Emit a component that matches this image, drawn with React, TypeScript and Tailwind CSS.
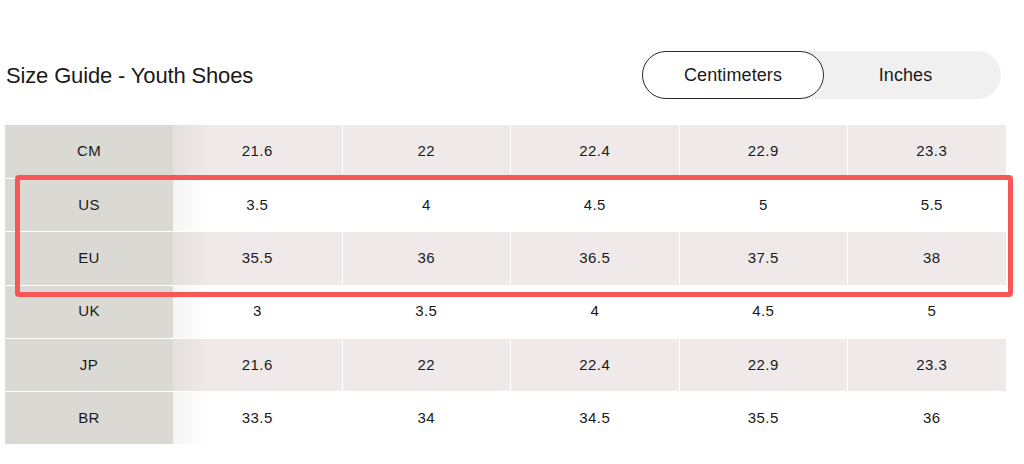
const rows: Array<{ label: string; values: string[]; shaded: boolean }> = [
  { label: 'CM', values: ['21.6', '22', '22.4', '22.9', '23.3'], shaded: true },
  { label: 'US', values: ['3.5', '4', '4.5', '5', '5.5'], shaded: false },
  { label: 'EU', values: ['35.5', '36', '36.5', '37.5', '38'], shaded: true },
  { label: 'UK', values: ['3', '3.5', '4', '4.5', '5'], shaded: false },
  { label: 'JP', values: ['21.6', '22', '22.4', '22.9', '23.3'], shaded: true },
  { label: 'BR', values: ['33.5', '34', '34.5', '35.5', '36'], shaded: false },
]

export default function App() {
  return (
    <div className="w-[1024px] h-[464px] bg-white text-[#1a1a1a] pt-[51px] font-['Liberation_Sans',Arial,sans-serif]">
      <div className="flex items-center justify-between pl-[6px] pr-[23px] h-[48px]">
        <h1 className="text-[22px] tracking-[-0.15px] leading-none pt-[1px]">Size Guide - Youth Shoes</h1>
        <div className="flex w-[359px] h-[48px] rounded-full bg-[#f1f0f0]">
          <button className="w-[182px] h-full rounded-full bg-white border border-[#2a2a2a] text-[18px] tracking-[0.1px]">
            Centimeters
          </button>
          <button className="flex-1 h-full pr-[14px] text-[18px] tracking-[0.1px]">Inches</button>
        </div>
      </div>

      <div className="relative mt-[26px] ml-[5px] w-[1001px]">
        <div className="w-[1001px] overflow-hidden">
          <div className="w-[1012px]">
            {rows.map((row, i) => (
              <div
                key={row.label}
                className={`relative grid grid-cols-[168px_repeat(5,168.5px)] h-[53.2px] text-[15px] tracking-[0.4px] ${
                  i > 0 ? 'border-t-[1.5px] border-white' : ''
                } ${row.shaded ? 'bg-[#efe9e9]' : 'bg-white'}`}
              >
                <div className="flex items-center justify-center bg-[#dad9d4]">{row.label}</div>
                {row.values.map((v, j) => (
                  <div
                    key={j}
                    className={`flex items-center justify-center ${j > 0 ? 'border-l-[1.5px] border-white' : ''}`}
                  >
                    {v}
                  </div>
                ))}
                <div className="absolute left-[168px] top-0 bottom-0 w-[36px] bg-gradient-to-r from-black/[0.04] to-transparent pointer-events-none" />
              </div>
            ))}
          </div>
        </div>
        <div className="absolute left-[10px] top-[50px] w-[998px] h-[122px] border-[5px] border-[#f95757] rounded-[4px] pointer-events-none" />
      </div>
    </div>
  )
}
